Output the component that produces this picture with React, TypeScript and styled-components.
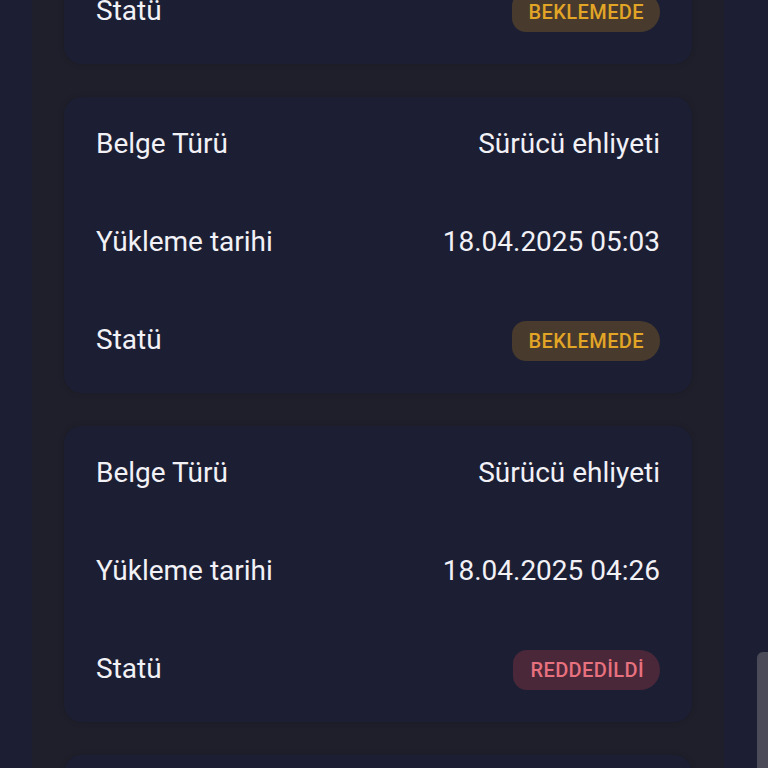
import React from "react";
import styled, { createGlobalStyle } from "styled-components";

const Global = createGlobalStyle`
  html, body { margin: 0; padding: 0; background: #1c1e33; overflow: hidden; }
  body { font-family: Roboto, "Noto Sans", sans-serif; }
`;

const Viewport = styled.div`
  position: relative;
  width: 768px;
  height: 768px;
  overflow: hidden;
  background: #1c1e33;
`;

const Panel = styled.div`
  margin: -232px 44px 0 32px;
  padding: 0 32px;
  background: #1f1f2b;
  display: flex;
  flex-direction: column;
  gap: 33px;
`;

const Card = styled.div`
  background: #1c1e33;
  border-radius: 18px;
  padding: 28px 32px 32px;
  display: flex;
  flex-direction: column;
  gap: 58px;
  box-shadow: 0 0 6px rgba(0, 0, 0, 0.12);
`;

const Row = styled.div`
  height: 40px;
  display: flex;
  align-items: center;
  justify-content: space-between;
`;

const Label = styled.span`
  font-size: 28px;
  color: #f1f1f6;
  margin-top: -4px;
`;

const Value = styled.span`
  font-size: 28px;
  color: #f1f1f6;
  margin-top: -4px;
`;

const Badge = styled.span<{ $tone: "pending" | "rejected" }>`
  height: 40px;
  box-sizing: border-box;
  display: inline-flex;
  align-items: center;
  padding: 0 16px 0 17px;
  border-radius: 14px 20px 20px 14px;
  font-size: 20px;
  font-weight: 500;
  letter-spacing: 0.4px;
  color: ${(p) => (p.$tone === "pending" ? "#e2a526" : "#e8717f")};
  background: ${(p) => (p.$tone === "pending" ? "#483a2c" : "#4a2839")};
`;

const Scrollbar = styled.div`
  position: absolute;
  right: 0;
  top: 652px;
  width: 11px;
  height: 140px;
  border-radius: 6px 0 0 6px;
  background: #4a4a58;
`;

type Doc = { type: string; date: string; status: "pending" | "rejected" };

const docs: Doc[] = [
  { type: "Sürücü ehliyeti", date: "18.04.2025 05:10", status: "pending" },
  { type: "Sürücü ehliyeti", date: "18.04.2025 05:03", status: "pending" },
  { type: "Sürücü ehliyeti", date: "18.04.2025 04:26", status: "rejected" },
  { type: "Sürücü ehliyeti", date: "18.04.2025 04:10", status: "rejected" },
];

export default function App() {
  return (
    <>
      <Global />
      <Viewport>
        <Panel>
          {docs.map((d, i) => (
            <Card key={i}>
              <Row>
                <Label>Belge Türü</Label>
                <Value>{d.type}</Value>
              </Row>
              <Row>
                <Label>Yükleme tarihi</Label>
                <Value>{d.date}</Value>
              </Row>
              <Row>
                <Label>Statü</Label>
                <Badge $tone={d.status}>
                  {d.status === "pending" ? "BEKLEMEDE" : "REDDEDİLDİ"}
                </Badge>
              </Row>
            </Card>
          ))}
        </Panel>
        <Scrollbar />
      </Viewport>
    </>
  );
}
